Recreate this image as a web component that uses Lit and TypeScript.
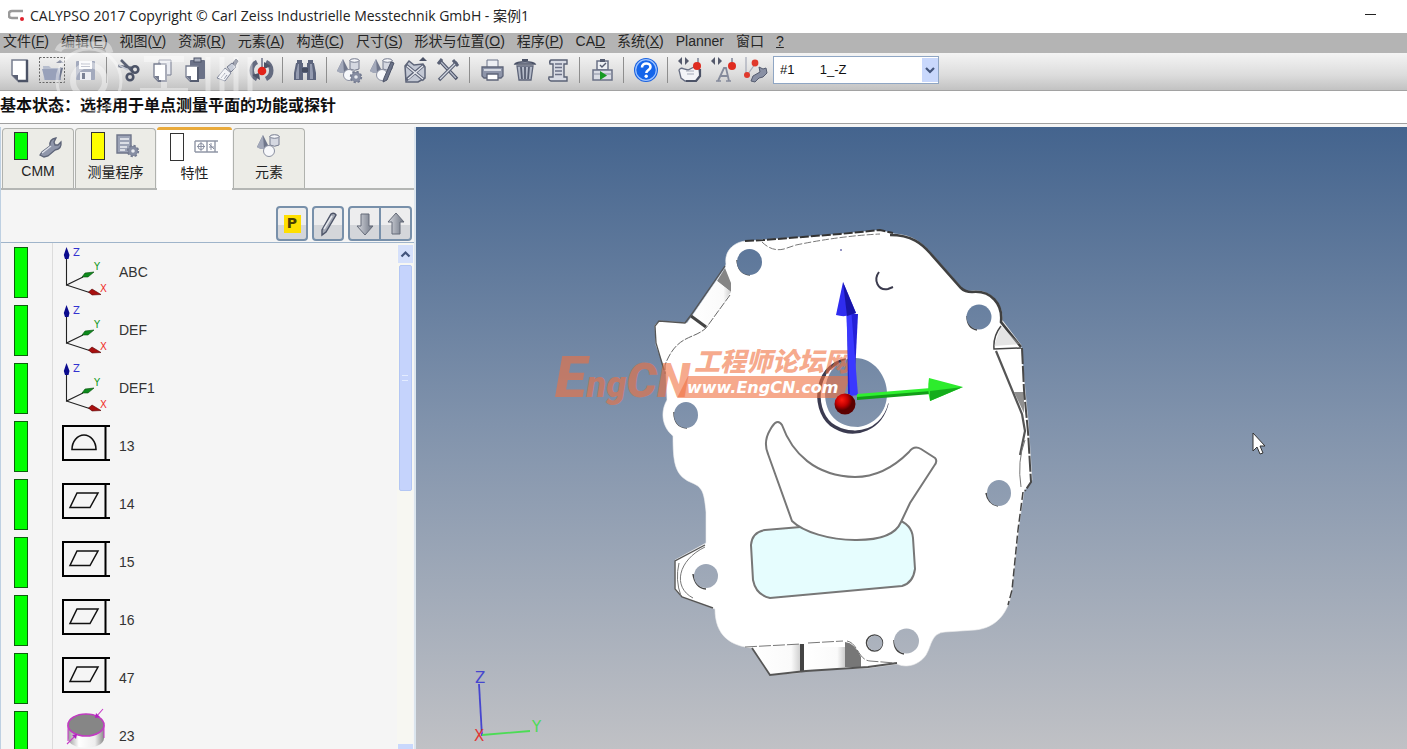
import { LitElement, html, svg, css, TemplateResult } from "lit";
import { customElement, property, state } from "lit/decorators.js";

type Row = { name: string; kind: "axes" | "profile" | "flat" | "cylinder" };

const ROWS: Row[] = [
  { name: "ABC", kind: "axes" },
  { name: "DEF", kind: "axes" },
  { name: "DEF1", kind: "axes" },
  { name: "13", kind: "profile" },
  { name: "14", kind: "flat" },
  { name: "15", kind: "flat" },
  { name: "16", kind: "flat" },
  { name: "47", kind: "flat" },
  { name: "23", kind: "cylinder" },
];

/* label, mnemonic, closing text */
const MENU: [string, string, string][] = [
  ["文件(", "F", ")"], ["编辑(", "E", ")"], ["视图(", "V", ")"], ["资源(", "R", ")"],
  ["元素(", "A", ")"], ["构造(", "C", ")"], ["尺寸(", "S", ")"], ["形状与位置(", "O", ")"],
  ["程序(", "P", ")"], ["CA", "D", ""], ["系统(", "X", ")"], ["Planner", "", ""],
  ["窗口", "", ""], ["", "?", ""],
];

const cross = (x: number, y: number) => svg`
  <path d="M${x} ${y} l-4 4 4 4z M${x + 3} ${y} l4 4 -4 4z" fill="#555a6c"/>`;

const gear = (x: number, y: number) => svg`
  <circle cx=${x} cy=${y} r="5" fill="#737a90" stroke="#737a90" stroke-width="2.4" stroke-dasharray="2.2 1.7"/>
  <circle cx=${x} cy=${y} r="4.6" fill="#868da2"/><circle cx=${x} cy=${y} r="1.8" fill="#e8eaf0"/>`;

const solids = svg`
  <path d="M7 2 L13 14 Q7 18 1 14Z" fill="#6f768b"/><path d="M7 2 L8 16 Q3 16 1 14Z" fill="#a3a9ba"/>
  <path d="M14 3 h9 v9 q-4.500 2.500 -9 0z" fill="#d5d8e1" stroke="#777d90"/><ellipse cx="18.500" cy="3.500" rx="4.500" ry="1.800" fill="#f6f7fa" stroke="#777d90"/>
  <circle cx="13" cy="18" r="5.500" fill="#f7f8fb" stroke="#8b90a1"/>`;

const GLYPHS: Record<string, TemplateResult> = {
  new: svg`<path d="M6 3h15v21h-9l-6-6z" fill="#fff" stroke="#777d8f" stroke-width="1.500"/><path d="M21 3v21h-9" fill="none" stroke="#4c5366" stroke-width="2.400"/><path d="M6 18h6v6z" fill="#5c6275"/>`,
  open: svg`<rect x="0.500" y="0.500" width="25" height="25" fill="none" stroke="#666" stroke-dasharray="2 1.500"/><path d="M4 9h6l2 2h9v12H5z" fill="#b6bdce"/><path d="M3 12h16l3 11H6z" fill="#98a1ba"/><path d="M21 10l3 1-3 12z" fill="#6d758b"/><path d="M17 6l4-3 4 3z" fill="#8d93a6"/>`,
  save: svg`<rect x="4" y="4" width="19" height="19" rx="1" fill="#a3aabd"/><rect x="7" y="4" width="13" height="8" fill="#fafafc"/><path d="M9 7h9M9 9.500h9" stroke="#9ba1b2"/><rect x="8" y="15" width="11" height="8" fill="#eceef3"/><rect x="10" y="16" width="3" height="6" fill="#7a8195"/>`,
  cut: svg`<path d="M5 3l12 12M2 9l15 2" stroke="#5a6175" stroke-width="2.600"/><path d="M3 8l9 5" stroke="#c4c9d5" stroke-width="1.500"/><circle cx="19" cy="12.500" r="3.300" fill="none" stroke="#4c5367" stroke-width="2.600"/><circle cx="14" cy="20" r="3.300" fill="none" stroke="#4c5367" stroke-width="2.600"/>`,
  copy: svg`<path d="M10 3h12v15H10z" fill="#e9ebf1" stroke="#777d90"/><path d="M5 7h12v17H9l-4-4z" fill="#fff" stroke="#777d90" stroke-width="1.300"/><path d="M17 8v16H9" fill="none" stroke="#6b7186" stroke-width="1.800"/><path d="M5 19h5v5z" fill="#777d90"/>`,
  paste: svg`<rect x="8" y="3" width="15" height="19" rx="1" fill="#6b7288"/><rect x="12" y="1" width="7" height="4" fill="#a9afbf" stroke="#4c5367"/><path d="M4 9h12v15H8l-4-4z" fill="#fff" stroke="#777d90" stroke-width="1.300"/><path d="M16 10v14H8" fill="none" stroke="#555c70" stroke-width="2"/><path d="M4 19h5v5z" fill="#6b7288"/>`,
  brush: svg`<path d="M18 6l3-4 2 2-3 5z" fill="#646b80" stroke="#555c70"/><path d="M12 10l5-4 4 4-5 5z" fill="#c7ccd8" stroke="#777d90"/><path d="M10 11l6 5-6 8-8-3z" fill="#f1f2f6" stroke="#81879a"/><path d="M6 21l4-5M9 22l3-4" stroke="#9197a8"/>`,
  probe: svg`<path d="M9 5a9.500 9.500 0 0 0 0 17M18 5a9.500 9.500 0 0 1 0 17" fill="none" stroke="#646b80" stroke-width="4.500"/><path d="M4 18l8 5-1-7zM23 9l-7-4 0 7z" fill="#4c5367"/><path d="M14 1v12" stroke="#6b7288" stroke-width="1.500"/><circle cx="14" cy="14" r="4.300" fill="#e2231a"/>`,
  find: svg`<path d="M5 3h5v3h1v4h4V6h1V3h5v3h1l2 10v7h-9v-7h-4v7H2v-7L4 6h1z" fill="#5d657d"/><path d="M6 7l-2 9v6h3V7zM18 7v15h3v-6l-1-9z" fill="#949bb0"/><rect x="10" y="11" width="6" height="4" fill="#454c60"/>`,
  solidsGear: svg`${solids}${gear(20, 20)}`,
  solidsPen: svg`${solids}<path d="M15 21L22 5l3 1-7 17-4 2z" fill="#6b7288" stroke="#4c5367"/>`,
  solidsDel: svg`<path d="M3 9l4-5 5 4 9-1 2 3v11l-7 4H4z" fill="#c3c8d4" stroke="#5d6478" stroke-width="1.500"/><path d="M4 8l18 15M22 8L4 23" stroke="#5d6478" stroke-width="3.400"/><path d="M5 9l16 13M21 9L6 22" stroke="#e6e8ee" stroke-width="1.400"/><path d="M17 4l4-4 4 4z" fill="#4c5367"/>`,
  tools: svg`<path d="M5 4l17 18" stroke="#4c5367" stroke-width="3.400"/><path d="M5 4l16 17" stroke="#b9bfcd" stroke-width="1.300"/><path d="M22 5L4 23" stroke="#5a6175" stroke-width="3.400"/><path d="M3 7l4-5M18 3l5 6" stroke="#5a6175" stroke-width="3"/><path d="M20 7L5 22" stroke="#d5d9e2" stroke-width="1.300"/>`,
  print: svg`<path d="M8 3h11v8H8z" fill="#eceef3" stroke="#6b7288"/><path d="M3 10h21v9l-2 2H5l-2-2z" fill="#8e95a9" stroke="#5d6478" stroke-width="1.300"/><path d="M5 12h17v2H5z" fill="#d4d8e1"/><path d="M8 17h11v6H8z" fill="#fff" stroke="#5d6478" stroke-width="1.300"/>`,
  trash: svg`<path d="M3 7c2-3 18-3 20 0z" fill="#c6cad6" stroke="#4c5367" stroke-width="1.400"/><path d="M10 3h6" stroke="#4c5367" stroke-width="2"/><path d="M5 9h16l-2 14H7z" fill="#b4bac8" stroke="#5d6478" stroke-width="1.300"/><path d="M9 10l1 12M13 10v12M17 10l-1 12" stroke="#555c70" stroke-width="1.800"/>`,
  report: svg`<path d="M6 3h16v4h-3v13h3v4H6q-3-1-2-4h4V7H5q-1-3 1-4z" fill="#d8dbe4" stroke="#5a6175" stroke-width="1.400"/><path d="M10 7h7M10 10.500h7M10 14h7M10 17.500h7" stroke="#6b7186" stroke-width="1.500"/>`,
  run: svg`<path d="M8 4h11v9H8z" fill="#eef0f4" stroke="#6b7186" stroke-width="1.500"/><path d="M11 2h5v3h-5z" fill="#555c70"/><path d="M11 8l2 2 4-4" fill="none" stroke="#555c70" stroke-width="1.400"/><path d="M4 13h19v10H4z" fill="#d9dce4" stroke="#6b7186" stroke-width="1.500"/><path d="M4 17h19" stroke="#8a90a2"/><path d="M11 14v9l7-4.500z" fill="#159a22"/>`,
  help: svg`<circle cx="13" cy="13" r="12" fill="#1a62e0"/><circle cx="13" cy="13" r="10.300" fill="#1565ea" stroke="#9fc4ff" stroke-width="1.200"/><path d="M9 10.500c0-5.500 8.500-5 8.500-.5 0 3-4.200 3-4.200 6" fill="none" stroke="#fff" stroke-width="2.600"/><circle cx="13.200" cy="19.300" r="1.700" fill="#fff"/>`,
  hand: svg`${cross(5, 0)}<path d="M2 13q2-3 5-1l4 1 6-3q3-1 5 2l1 7-4 5H8l-4-3-1-4z" fill="#f3f4f7" stroke="#676e82" stroke-width="1.300"/><path d="M23 12v7l-4 5H9" fill="none" stroke="#4c5367" stroke-width="2.200"/><path d="M9 14h8M10 17h7" stroke="#a4a9b7"/><path d="M21 1v8" stroke="#6b7288" stroke-width="1.300"/><circle cx="20" cy="9" r="4" fill="#df2c20"/>`,
  auto: svg`${cross(5, 0)}<path d="M22 1v8" stroke="#6b7288" stroke-width="1.300"/><circle cx="22" cy="9" r="4" fill="#df2c20"/><path d="M8 24l6-13h2l3 13M11 19h7" fill="none" stroke="#858b9c" stroke-width="1.800"/><path d="M6 24h5M16 24h5" stroke="#858b9c" stroke-width="1.400"/>`,
  probeTool: svg`<path d="M3 0v17M5 17L12 7" stroke="#a4a9b7" stroke-width="1.200"/><circle cx="12" cy="6" r="3.400" fill="#e0392c"/><circle cx="4" cy="18" r="3" fill="#e0392c"/><path d="M8 24l2-5 7-4-1-5 4 2 3-1 1 5-4 4-4 1-4 4z" fill="#8990a4" stroke="#555c70"/>`,
};

const TOOLS = [
  ["new", "open", "save"],
  ["cut", "copy", "paste", "brush", "probe"],
  ["find"],
  ["solidsGear", "solidsPen", "solidsDel", "tools"],
  ["print", "trash", "report"],
  ["run"],
  ["help"],
  ["hand", "auto", "probeTool"],
];

const TAB_ICONS: TemplateResult[] = [
  svg`<path d="M3 22l2-3 8-6q-1-7 6-8l-2 4 1 3 3 0 3-3q1 7-6 8l-7 6-4 1z" fill="#8f96aa" stroke="#5d6478" stroke-width="1.300"/><path d="M5 20l9-7" stroke="#dfe2ea" stroke-width="1.400"/>`,
  svg`<path d="M3 2h14v18H3z" fill="#9ca3b6" stroke="#6f768a" stroke-width="1.400"/><path d="M6 6h9M6 10h9M6 14h7M6 17h5" stroke="#f0f2f6" stroke-width="1.500"/>${gear(19, 18)}`,
  svg`<path d="M2 7h23M2 18h23M2 7v11M14 7v11M22 7v11" stroke="#9096a6" stroke-width="1.400" fill="none"/><circle cx="8" cy="12.500" r="3" fill="none" stroke="#8a90a2"/><path d="M4 12.500h8M8 8v9M16 10l5 5M16 13h5M18 9v7" stroke="#8a90a2"/>`,
  solids,
];

const TABS: { label: string; lamp: string }[] = [
  { label: "CMM", lamp: "#00ff00" },
  { label: "测量程序", lamp: "#ffff00" },
  { label: "特性", lamp: "#ffffff" },
  { label: "元素", lamp: "" },
];

@customElement("cal-icon")
class CalIcon extends LitElement {
  @property() name = "new";
  static styles = css`
    :host { display: block; width: 26px; height: 26px; }
    svg { display: block; width: 100%; height: 100%; overflow: visible; }
  `;
  render() {
    return html`<svg viewBox="0 0 26 26" aria-hidden="true">${GLYPHS[this.name]}</svg>`;
  }
}

@customElement("feature-glyph")
class FeatureGlyph extends LitElement {
  @property() kind: Row["kind"] = "flat";
  static styles = css`
    :host { display: block; width: 50px; height: 50px; }
    svg { display: block; width: 100%; height: 100%; overflow: visible; }
    text { font: 10px "DejaVu Sans", sans-serif; }
  `;
  render() {
    const frame = svg`<path d="M49 5H2V39H49M44.500 5V39" fill="none" stroke="#000" stroke-width="2"/>`;
    const art = {
      axes: svg`
        <path d="M5.500 4V38L22 30M5.500 38L30 46" fill="none" stroke="#222" stroke-width="1.100"/>
        <path d="M5.500 0L8.500 8 7.500 12H4L2.800 8z" fill="#0b0b8e"/>
        <path d="M33 25L24 26 21 30 27 30z" fill="#0d8a1c" stroke="#064d0c" stroke-width=".6"/>
        <path d="M40 47.500L31 42 27.500 45 31 48z" fill="#a80f0f" stroke="#500" stroke-width=".6"/>
        <text x="12" y="9" fill="#3232d0">Z</text><text x="33" y="23" fill="#149a24">Y</text>
        <text x="39" y="45" fill="#f0302c">X</text>`,
      profile: svg`${frame}<path d="M11 28.500a12 14.500 0 0 1 24 0z" fill="none" stroke="#111" stroke-width="1.600"/>`,
      flat: svg`${frame}<path d="M16 14H37L29 28.500H9z" fill="none" stroke="#111" stroke-width="1.500"/>`,
      cylinder: svg`
        <defs><linearGradient id="c"><stop offset="0" stop-color="#999"/><stop offset=".3" stop-color="#fff"/><stop offset=".75" stop-color="#eee"/><stop offset="1" stop-color="#888"/></linearGradient></defs>
        <path d="M7 13v14c0 13 36 13 36 0V13z" fill="url(#c)"/>
        <ellipse cx="25" cy="14" rx="18" ry="11" fill="#868686" stroke="#c03cc0" stroke-width="1.600"/>
        <path d="M7 14v16M43 14v13M42 -2L35 6M6 33L15 24" stroke="#c83cc8" fill="none" stroke-width="1.100"/>
        <path d="M34 7l1-5 4 4zM16 23l-5 1 4 4z" fill="#b020c0"/>`,
    }[this.kind];
    return html`<svg viewBox="0 0 50 50" aria-hidden="true">${art}</svg>`;
  }
}

@customElement("cad-view")
class CadView extends LitElement {
  static styles = css`
    :host { display: block; overflow: hidden; min-height: 0; background: linear-gradient(#44648e, #8193ac 48%, #c0c1c5); }
    svg { display: block; width: 100%; height: 100%; }
    .mark { fill: #f07040; fill-opacity: 0.6; }
    .logo { font: italic 900 48px Roboto, "Liberation Sans", sans-serif; }
    .big { font-size: 58px; }
    .small { font-size: 36px; }
    .forum { font: italic 900 26px "Noto Sans CJK SC", sans-serif; }
    .site { font: italic bold 16px "DejaVu Sans", sans-serif; fill: #fff; }
    .axis { font: 15px "DejaVu Sans", sans-serif; }
  `;
  render() {
    return html`
      <svg viewBox="416 127 991 622" preserveAspectRatio="xMidYMid meet" role="img" aria-label="CAD">
        <defs>
          <mask id="holes" maskUnits="userSpaceOnUse" x="640" y="220" width="410" height="470">
            <rect x="640" y="220" width="410" height="470" fill="#fff"/>
            <ellipse cx="749.500" cy="262" rx="12.500" ry="13"/>
            <circle cx="979" cy="317" r="12.500"/>
            <ellipse cx="686" cy="415" rx="12" ry="13"/>
            <ellipse cx="999" cy="493" rx="12" ry="13"/>
            <circle cx="706" cy="576" r="12"/>
            <circle cx="906.500" cy="641" r="12.500"/>
            <circle cx="875" cy="643" r="7.500"/>
            <path d="M887 394C887 376 874 358 855 358C837 358 825 374 825 393C825 415 838 427 858 427C874 425 887 412 887 394Z"/>
          </mask>
          <radialGradient id="ball" cx=".35" cy=".3"><stop offset="0" stop-color="#ff1b10"/><stop offset=".6" stop-color="#c00000"/><stop offset="1" stop-color="#5c0000"/></radialGradient>
          <linearGradient id="side"><stop offset="0" stop-color="#fff"/><stop offset=".8" stop-color="#fafafa"/><stop offset="1" stop-color="#ccc"/></linearGradient>
        </defs>
        <g mask="url(#holes)">
          <path fill="#fff" stroke="#eee" stroke-width=".6" d="M726 264C724 252 733 242 746 241L762 240L840 234L880 230L895 234C913 235 923 244 930 252L961 287Q965 292 972 291C990 289 1003 303 1002 320L1021 345L1024 380L1028 420L1032 480L1024 491L1019 525L1012 590C1009 612 997 628 975 630L945 632C931 633 932 645 926 655C918 666 906 668 897 664L868 668L806 670L770 675L752 648C731 646 715 636 715 609L682 597L675 590L675 560L706 543L706 512C704 490 702 487 690 482C675 475 673 463 673 436C662 427 660 412 667 400L666 372L656 345L655 325L659 321L687 323L692 316L725 268Z"/>
          <path d="M717 281L725 268L731 283L731 292Z" fill="#858585"/>
          <path d="M693 316L717 281L731 292L706 327Z" fill="url(#side)"/>
          <path d="M691 316L706 327" stroke="#444" stroke-width="3"/>
          <path d="M725 266L691 315L685 323L659 321L655 326L656 343L664 370" fill="none" stroke="#555" stroke-width="1.300"/>
          <path d="M730 295L706 328C693 340 677 334 665 365L665 374" fill="none" stroke="#666" stroke-width="1" stroke-dasharray="8 1.500"/>
          <path d="M745 241L764 240L840 234L880 230L893 233" fill="none" stroke="#333" stroke-width="2" stroke-dasharray="9 2"/>
          <path d="M762 242Q772 252 784 249L796 245Q840 236 880 234" fill="none" stroke="#777" stroke-dasharray="7 2"/>
          <path d="M890 235C912 235 922 244 930 253L961 288Q965 292 972 292C991 290 1003 304 1001 322L1021 347" fill="none" stroke="#404040" stroke-width="2.600"/>
          <path d="M1001 326Q993 336 994 349L1021 348" fill="none" stroke="#444" stroke-width="1.500"/>
          <path d="M994 346L1020 344L1001 326Z" fill="#bbb" fill-opacity=".4"/>
          <path d="M1014 392L1024 392L1024 413Z" fill="#909090"/>
          <path d="M996 351L1022 414L1025 431L1020 455" fill="none" stroke="#555" stroke-width="2.200"/>
          <path d="M1022 348L1024 390L1028 432L1031 482L1025 491" fill="none" stroke="#484848" stroke-width="2" stroke-dasharray="16 2"/>
          <path d="M1025 440Q1017 461 1021 487" fill="none" stroke="#777"/>
          <path d="M1023 492L1018 530L1012 590L1008 605" fill="none" stroke="#444" stroke-width="1.500" stroke-dasharray="8 3"/>
          <path d="M705 545L675 561L675 589L682 597L713 608" fill="none" stroke="#555" stroke-width="1.400"/>
          <path d="M705 547C678 560 672 587 693 598M679 563Q675 580 681 596" fill="none" stroke="#777"/>
          <path d="M752 648L801 644L801 673L770 675Z" fill="url(#side)"/>
          <path d="M845 642Q855 643 861 657L861 667L845 667Z" fill="#777"/>
          <path d="M806 647H845V667L806 670Z" fill="url(#side)"/>
          <path d="M802 644V672" stroke="#444" stroke-width="4"/>
          <path d="M752 648L770 675L806 671L868 667L897 663" fill="none" stroke="#555" stroke-width="1.800"/>
          <path d="M745 647L801 644M808 643L843 641M847 641C858 643 858 660 870 661L895 663" fill="none" stroke="#777" stroke-dasharray="12 2"/>
          <path fill="#e6fdfe" stroke="#777" stroke-width="2" d="M765 530L896 519Q912 524 913 538L915 569Q913 583 902 586L770 598Q756 595 753 580L751 545Q752 532 765 530Z"/>
          <path fill="#fff" stroke="#777" stroke-width="2" d="M770 430Q777 417 782 425C792 453 815 476 855 477C878 477 895 466 909 452Q914 445 921 449L935 458Q938 461 934 466L910 503L901 522C893 541 862 540 855 540C830 540 803 532 792 521L768 454Q763 442 770 430Z"/>
          <path d="M846 360C812 366 812 415 835 427C856 439 881 428 887 403" fill="none" stroke="#3b3b50" stroke-width="3.500"/>
          <path d="M828 374C820 398 829 424 855 429C873 429 884 416 887 402" fill="none" stroke="#fff" stroke-width="3"/>
          <path d="M879 272C873 280 878 291 888 289L893 287" fill="none" stroke="#3b3b4d" stroke-width="2"/>
          <circle cx="841" cy="250" r="1" fill="#7373b0"/>
          <g fill="none" stroke="#444" stroke-width="1.500">
            <path d="M737 260Q738 274 750 275M967 316Q967 328 977 330M674 412Q674 427 687 428M986 493Q988 504 998 506M693 574Q695 588 706 589M894 640Q894 652 904 654"/>
            <circle cx="874.500" cy="643" r="8"/>
          </g>
        </g>
        <g class="mark">
          <text class="logo" x="555" y="397"><tspan class="big">E</tspan><tspan class="small">ng</tspan>CN</text>
          <text class="forum" x="694" y="371">工程师论坛网</text>
          <path d="M688 376H850L843 398H677Z"/>
        </g>
        <text class="site" x="687" y="393">www.EngCN.com</text>
        <path d="M847 314L858 314L854 394L848 394Z" fill="#2420d8"/>
        <path d="M846 308L851 308L858 395L850 396Z" fill="#3a38ff"/>
        <path d="M843 282L856 313Q846 318 836 315Z" fill="#2f2cf0"/><path d="M843 282L856 313L847 316Z" fill="#1714a8"/>
        <path d="M857 394L931 388L931 393L857 399Z" fill="#2ff02f"/><path d="M857 397L931 391V394L857 400Z" fill="#129e18"/>
        <path d="M929 378L963 387L930 401Q927 390 929 378Z" fill="#2dec2d"/><path d="M930 391L963 387L930 401Z" fill="#15ad1c"/>
        <circle cx="845" cy="404" r="10.500" fill="url(#ball)"/>
        <path d="M479 684L482 736" stroke="#4646cf" stroke-width="1.800"/><path d="M482 735L530 731" stroke="#4cdc55" stroke-width="1.800"/>
        <text class="axis" x="475" y="683" fill="#4646cf">Z</text>
        <text class="axis" x="532" y="732" fill="#4cdc55">Y</text>
        <text class="axis" x="474" y="741" fill="#e03838">X</text>
        <path d="M1253 433V451L1257 447L1260 454L1263 453L1260 446H1265Z" fill="#fff" stroke="#333" stroke-width="1"/>
      </svg>`;
  }
}

@customElement("app-root")
class AppRoot extends LitElement {
  @state() private tab = 2;

  static styles = css`
    :host { display: grid; grid-template-rows: 33px 20px auto 33px 3px minmax(0, 1fr); height: 100vh; overflow: hidden; background: #f5f5f5; color: #222; font: 14px "Liberation Sans", "Noto Sans CJK SC", sans-serif; }
    button { font: inherit; color: inherit; border: 0; background: none; padding: 0; }
    .title { display: flex; align-items: center; gap: 6px; padding: 0 30px 4px 8px; background: #fff; font: 14px "Open Sans", "Noto Sans CJK SC", sans-serif; }
    .brand { width: 16px; height: 12px; }
    .caption { flex: 1; white-space: nowrap; margin: 0; font: inherit; }
    .min { width: 13px; height: 16px; display: grid; place-items: center; }
    .dash { width: 11px; height: 1px; background: #222; }
    .menu { display: flex; align-items: center; gap: 12px; padding: 0 3px 4px; background: #b4b4b4; white-space: nowrap; }
    .menu button { line-height: 16px; color: #262626; }
    .bar { position: relative; display: flex; align-items: center; height: 37px; box-sizing: border-box; height: 38px; padding: 0 0 4px 2px; background: linear-gradient(#f4f4f4, #dcdcdc 60%, #c2c2c2); border-bottom: 1px solid #a2a2a2; }
    .group { display: flex; }
    .group + .group::before { content: ""; width: 1px; height: 26px; margin: 0 5px; background: #8e8e8e; }
    .tool { width: 33px; display: grid; place-items: center; }
    .probe { display: grid; grid-template-columns: 148px 18px; width: 166px; height: 28px; margin-left: 1px; background: #fff; border: 1px solid #8fa6c4; box-sizing: border-box; align-items: center; }
    .probe select { grid-area: 1 / 1 / 2 / 3; width: 100%; height: 26px; appearance: none; border: 0; background: none; padding: 0 6px; font: 13px "Liberation Sans", sans-serif; color: #111; }
    .probe svg { grid-area: 1 / 2; width: 16px; height: 24px; background: #c9d8fc; pointer-events: none; }
    .ghost { position: absolute; left: 46px; top: -12px; width: 220px; height: 72px; pointer-events: none; z-index: 1; }
    .state { display: flex; align-items: center; background: #fff; border-bottom: 1px solid #a0a0a0; box-sizing: border-box; font: bold 16px "Noto Sans CJK SC", sans-serif; color: #111; margin: 0; padding-bottom: 6px; white-space: nowrap; }
    .main { grid-row: 6; display: grid; grid-template-columns: 416px minmax(0, 1fr); min-height: 0; }
    .side { display: grid; grid-template-rows: 63px 53px minmax(0, 1fr); min-height: 0; border-left: 1px solid #bed0e2; border-right: 2px solid #dbe5ee; box-sizing: border-box; }
    .tabs { display: flex; align-items: flex-end; gap: 1px; border-bottom: 2px solid #b4b6b4; box-sizing: border-box; padding-left: 1px; }
    .tab { display: grid; grid-template-rows: 34px 16px; align-content: start; width: 72px; height: 60px; box-sizing: border-box; border: 1px solid #b0b2ae; border-bottom: 0; border-radius: 4px 4px 0 0; background: #ecece7; justify-items: center; align-items: center; }
    .tab.wide { width: 81px; }
    .tab.on { width: 75px; height: 63px; margin-bottom: -2px; background: #fff; border: 0; border-top: 3px solid #e9aa3c; border-radius: 3px 3px 0 0; }
    .pair { display: flex; justify-content: center; align-items: center; gap: 9px; height: 30px; }
    .pair svg { width: 26px; height: 26px; overflow: visible; }
    .lamp { width: 14px; height: 28px; box-sizing: border-box; border: 1px solid #333; }
    .keys { display: flex; justify-content: flex-end; align-items: flex-end; gap: 4px; padding: 0 2px 1px 0; border-bottom: 1px solid #9fb4ca; }
    .key { width: 32px; height: 35px; box-sizing: border-box; border: 2px solid #7890aa; border-radius: 4px; background: linear-gradient(#ededee 55%, #d4d6da 55%); display: grid; place-items: center; }
    .duo { display: flex; }
    .duo .key:first-child { border-radius: 4px 0 0 4px; border-right-width: 1px; }
    .duo .key:last-child { border-radius: 0 4px 4px 0; border-left-width: 1px; }
    .key svg { width: 24px; height: 26px; }
    .p { width: 17px; height: 18px; background: #ffdf00; color: #4a4000; font: bold 14px/16px "DejaVu Sans", sans-serif; }
    .body { display: grid; grid-template-columns: minmax(0, 1fr) 16px; padding-right: 1px; min-height: 0; }
    .list { margin: 0; padding: 3px 0 0; list-style: none; overflow: hidden; min-height: 0; background: linear-gradient(90deg, transparent 51px, #dcdcdc 51px, #dcdcdc 52px, transparent 52px); }
    .row { display: grid; grid-template-columns: 14px 50px 1fr; column-gap: 33px; align-items: center; height: 58px; padding-left: 13px; }
    .row .flag { width: 14px; height: 51px; margin-bottom: 5px; box-sizing: border-box; border: 1px solid #0d5f0d; background: #00ff00; }
    .row feature-glyph { margin-bottom: 6px; }
    .row .name { margin: 0 0 6px -25px; color: #333; }
    .scroll { display: flex; flex-direction: column; align-items: center; padding-top: 2px; background: #f7f7f2; }
    .up { width: 15px; height: 18px; background: #d5e0fb; display: grid; place-items: center; }
    .thumb { width: 13px; height: 39%; min-height: 226px; margin-top: 2px; border: 1px solid #b3c6f4; border-radius: 2px; background: #c5d3fc; box-sizing: border-box; display: grid; place-items: center; }
    .grip { width: 6px; height: 4px; border: solid #e4ecff; border-width: 1px 0; }
    .down { width: 15px; height: 5px; margin-top: auto; background: #c9d8fc; }
  `;

  private tabView(t: { label: string; lamp: string }, i: number) {
    const on = i === this.tab;
    return html`<button role="tab" aria-selected=${on} class="tab ${on ? "on" : ""} ${i === 1 ? "wide" : ""}" @click=${() => (this.tab = i)}>
      <span class="pair">${t.lamp ? html`<span class="lamp" style="background:${t.lamp}"></span>` : ""}
        <svg viewBox="0 0 26 26" aria-hidden="true">${TAB_ICONS[i]}</svg></span>
      <span>${t.label}</span>
    </button>`;
  }

  render() {
    const arrow = (d: string) => html`<svg viewBox="0 0 24 26" aria-hidden="true">
      <defs><linearGradient id="m"><stop offset="0" stop-color="#d8dae0"/><stop offset="1" stop-color="#6d7482"/></linearGradient></defs>
      <path d=${d} fill="url(#m)" stroke="#656b78"/></svg>`;
    return html`
      <header class="title">
        <svg class="brand" viewBox="0 0 16 12" aria-hidden="true"><path d="M15 2H4Q1 2 1 5V7Q1 9 4 9H10" fill="none" stroke="#9a9a9a" stroke-width="2.600"/><circle cx="14" cy="10" r="2" fill="#e0202c"/></svg>
        <h1 class="caption">CALYPSO 2017 Copyright © Carl Zeiss Industrielle Messtechnik GmbH - 案例1</h1>
        <button class="min" aria-label="Minimize"><span class="dash"></span></button>
      </header>
      <nav class="menu">${MENU.map(([a, k, b]) => html`<button>${a}${k ? html`<u>${k}</u>` : ""}${b}</button>`)}</nav>
      <div class="bar" role="toolbar">
        ${TOOLS.map((g) => html`<div class="group">${g.map((n) => html`<button class="tool" aria-label=${n}><cal-icon name=${n}></cal-icon></button>`)}</div>`)}
        <label class="probe">
          <select aria-label="Probe"><option>#1\u00a0\u00a0\u00a0\u00a0\u00a0\u00a0\u00a01_-Z</option></select>
          <svg viewBox="0 0 16 24" aria-hidden="true"><path d="M4 10l4 4 4-4" fill="none" stroke="#43557c" stroke-width="2.200"/></svg>
        </label>
        <svg class="ghost" viewBox="0 0 220 72" aria-hidden="true">
          <g fill="none" stroke="#fff" stroke-opacity=".4">
            <path d="M12 10Q14 4 22 4H58Q62 4 64 12" stroke-width="7"/>
            <circle cx="43" cy="40" r="16" stroke-width="6"/><circle cx="43" cy="40" r="32" stroke-width="3"/>
            <path d="M98 18H138M118 18V50M94 50H142" stroke-width="6"/>
            <path d="M162 16V60M176 16V60M190 16V60M204 16V60" stroke-width="5"/>
          </g>
        </svg>
      </div>
      <p class="state">基本状态：选择用于单点测量平面的功能或探针</p>
      <div class="main">
        <section class="side">
          <div class="tabs" role="tablist">${TABS.map((t, i) => this.tabView(t, i))}</div>
          <div class="keys">
            <button class="key"><span class="p">P</span></button>
            <button class="key" aria-label="Edit"><svg viewBox="0 0 24 26" aria-hidden="true"><path d="M6 24L6 19 15 3Q18 1 20 4L10 21Z" fill="#a3a8b4" stroke="#4d5468" stroke-width="1.400"/><path d="M8 18L16 5" stroke="#e5e7ec" stroke-width="1.600"/></svg></button>
            <div class="duo">
              <button class="key" aria-label="Down">${arrow("M8 3H16V15H20L12 24L4 15H8Z")}</button>
              <button class="key" aria-label="Up">${arrow("M8 23H16V11H20L12 2L4 11H8Z")}</button>
            </div>
          </div>
          <div class="body">
            <ul class="list">
              ${ROWS.map((r) => html`<li class="row"><span class="flag"></span><feature-glyph .kind=${r.kind}></feature-glyph><span class="name">${r.name}</span></li>`)}
            </ul>
            <div class="scroll">
              <button class="up" aria-label="Scroll up"><svg width="11" height="8" viewBox="0 0 11 8" aria-hidden="true"><path d="M1.500 6.500L5.500 2.500L9.500 6.500" fill="none" stroke="#43557c" stroke-width="2.200"/></svg></button>
              <div class="thumb"><span class="grip"></span></div>
              <div class="down"></div>
            </div>
          </div>
        </section>
        <cad-view></cad-view>
      </div>`;
  }
}
